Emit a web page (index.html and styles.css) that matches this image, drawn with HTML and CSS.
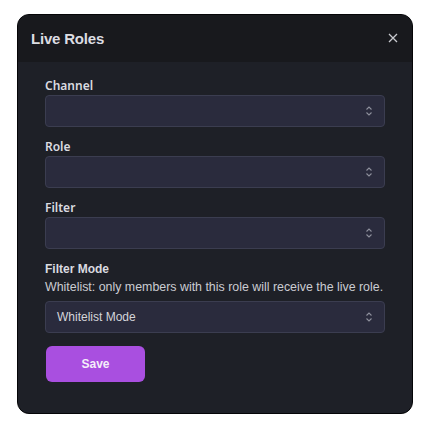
FILE: index.html
```html
<!DOCTYPE html>
<html>
<head>
<meta charset="utf-8">
<link rel="stylesheet" href="styles.css">
</head>
<body>
<div class="modal">
  <div class="modal-header">
    <h2 class="title">Live Roles</h2>
    <svg class="close" width="10" height="10" viewBox="0 0 10 10"><path d="M1 1 L9 9 M9 1 L1 9" stroke="#c9cad0" stroke-width="1.3" fill="none"/></svg>
  </div>
  <div class="modal-body">
    <div class="field">
      <div class="label">Channel</div>
      <div class="select"><span class="value"></span><svg class="chev" width="8" height="12" viewBox="0 0 8 12"><path d="M1.5 4.5 L4 2 L6.5 4.5 M1.5 7.5 L4 10 L6.5 7.5" stroke="#8d8f9c" stroke-width="1.1" fill="none"/></svg></div>
    </div>
    <div class="field">
      <div class="label">Role</div>
      <div class="select"><span class="value"></span><svg class="chev" width="8" height="12" viewBox="0 0 8 12"><path d="M1.5 4.5 L4 2 L6.5 4.5 M1.5 7.5 L4 10 L6.5 7.5" stroke="#8d8f9c" stroke-width="1.1" fill="none"/></svg></div>
    </div>
    <div class="field">
      <div class="label">Filter</div>
      <div class="select"><span class="value"></span><svg class="chev" width="8" height="12" viewBox="0 0 8 12"><path d="M1.5 4.5 L4 2 L6.5 4.5 M1.5 7.5 L4 10 L6.5 7.5" stroke="#8d8f9c" stroke-width="1.1" fill="none"/></svg></div>
    </div>
    <div class="field mode">
      <div class="label label-alt">Filter Mode</div>
      <div class="desc">Whitelist: only members with this role will receive the live role.</div>
      <div class="select"><span class="value">Whitelist Mode</span><svg class="chev" width="8" height="12" viewBox="0 0 8 12"><path d="M1.5 4.5 L4 2 L6.5 4.5 M1.5 7.5 L4 10 L6.5 7.5" stroke="#8d8f9c" stroke-width="1.1" fill="none"/></svg></div>
    </div>
    <button class="save">Save</button>
  </div>
</div>
</body>
</html>
```
FILE: styles.css
```css
html, body {
  margin: 0;
  padding: 0;
  background: #ffffff;
}
body {
  padding: 14px 0 0 17px;
}
.modal {
  width: 394px;
  height: 398px;
  border: 1px solid #050507;
  border-radius: 12px;
  overflow: hidden;
  background: #1e2027;
  display: flex;
  flex-direction: column;
}
.modal-header {
  height: 47px;
  background: #18191d;
  display: flex;
  align-items: center;
  justify-content: space-between;
  padding: 0 14px 0 13px;
}
.title {
  margin: 0;
  font-family: "Liberation Sans", Arial, sans-serif;
  font-weight: 700;
  font-size: 15px;
  color: #dcdde2;
  letter-spacing: -0.2px;
}
.close {
  display: block;
  margin-top: -1px;
}
.modal-body {
  padding: 15px 27px 0 27px;
  display: flex;
  flex-direction: column;
}
.field {
  display: flex;
  flex-direction: column;
  margin-bottom: 11px;
}
.label {
  font-family: "Noto Sans", "Open Sans", sans-serif;
  font-weight: 600;
  font-size: 12px;
  line-height: 18px;
  color: #dadbe0;
}
.label-alt {
  font-family: "Liberation Sans", Arial, sans-serif;
  font-weight: 700;
}
.desc {
  font-family: "Liberation Sans", Arial, sans-serif;
  font-size: 12.4px;
  line-height: 18px;
  color: #cbccd2;
  margin-bottom: 5px;
  white-space: nowrap;
}
.select {
  height: 30px;
  border: 1px solid #3b3d50;
  border-radius: 4px;
  background: #2a2b3d;
  display: flex;
  align-items: center;
  justify-content: space-between;
  padding: 0 11px 0 11px;
}
.value {
  font-family: "Liberation Sans", Arial, sans-serif;
  font-size: 12px;
  color: #d4d5da;
}
.chev {
  display: block;
}
.mode {
  margin-bottom: 13px;
}
.save {
  width: 99px;
  height: 36px;
  margin-left: 1px;
  border: none;
  border-radius: 6px;
  background: #a94fe0;
  color: #f4eefa;
  font-family: "Liberation Sans", Arial, sans-serif;
  font-weight: 700;
  font-size: 12px;
  cursor: pointer;
}
```
